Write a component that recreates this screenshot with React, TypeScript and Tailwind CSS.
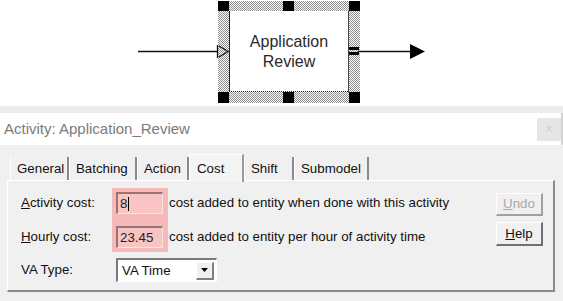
import React from "react";

const font = { fontFamily: '"Liberation Sans", Arial, sans-serif' } as React.CSSProperties;

function Diagram() {
  return (
    <div className="relative h-[106px] w-full bg-white">
      <svg className="absolute left-0 top-0" width="563" height="106" viewBox="0 0 563 106">
        <defs>
          <pattern id="dots" width="2" height="2" patternUnits="userSpaceOnUse">
            <rect width="2" height="2" fill="#ffffff" />
            <rect x="0" y="0" width="1" height="1" fill="#8c8c8c" />
            <rect x="1" y="1" width="1" height="1" fill="#8c8c8c" />
          </pattern>
        </defs>
        <line x1="138" y1="51.5" x2="218" y2="51.5" stroke="#111" strokeWidth="1.4" />
        <path d="M218 1 H360 V103 H218 Z M229 11 V92 H349 V11 Z" fill="url(#dots)" fillRule="evenodd" />
        <rect x="229" y="11" width="120" height="81" fill="#fff" />
        <line x1="229.5" y1="11" x2="229.5" y2="92" stroke="#222" strokeWidth="1" />
        <line x1="229" y1="91.5" x2="349" y2="91.5" stroke="#222" strokeWidth="1" strokeDasharray="1 1" />
        <line x1="348.5" y1="11" x2="348.5" y2="92" stroke="#444" strokeWidth="1" />
        {[218, 283, 349].map((x) => (
          <React.Fragment key={x}>
            <rect x={x} y="1" width="11" height="10" fill="#000" />
            <rect x={x} y="92" width="11" height="11" fill="#000" />
          </React.Fragment>
        ))}
        <line x1="217.5" y1="45" x2="217.5" y2="58" stroke="#111" strokeWidth="1.3" />
        <path d="M219 46 L228 51.5 L219 57" fill="none" stroke="#111" strokeWidth="1.2" />
        <rect x="349" y="47" width="10" height="3" fill="#000" />
        <rect x="349" y="52" width="10" height="3" fill="#000" />
        <line x1="358" y1="51.5" x2="411" y2="51.5" stroke="#111" strokeWidth="1.4" />
        <path d="M410 44 L425 51.5 L410 59 Z" fill="#000" />
      </svg>
      <div
        className="absolute left-[229px] top-[11px] flex h-[81px] w-[120px] flex-col items-center justify-center text-[16px] leading-[20px] text-[#2a2a2a]"
        style={font}
      >
        <span>Application</span>
        <span>Review</span>
      </div>
    </div>
  );
}

function Tab({ label, w, selected }: { label: string; w: number; selected?: boolean }) {
  if (selected) {
    return (
      <div
        className="relative z-10 mb-[-2px] flex h-[28px] items-start border-l border-t border-r-2 border-l-white border-t-white border-r-[#9a9a9a] bg-[#f4f4f4] pl-[7px] pt-[4px] text-[13.3px] text-[#111]"
        style={{ width: w }}
      >
        {label}
      </div>
    );
  }
  return (
    <div
      className="flex h-[23px] items-center border-l border-r-2 border-l-white border-r-[#8a8a8a] pl-[6px] text-[13.3px] text-[#111]"
      style={{ width: w }}
    >
      {label}
    </div>
  );
}

export default function App() {
  return (
    <div className="flex h-[301px] w-[563px] flex-col overflow-hidden bg-white" style={font}>
      <Diagram />
      <div className="h-[7px] bg-[#ececec]" />
      <div className="flex h-[32px] items-center justify-between border-r-2 border-r-[#d4d4d4] bg-white pl-[4px] pr-[0px]">
        <span className="text-[15px] text-[#7b7b7b]">Activity: Application_Review</span>
        <div className="flex h-[23px] w-[24px] items-center justify-center bg-[#e6e6e6] text-[12px] leading-none text-[#cfcfcf]">
          ×
        </div>
      </div>
      <div className="flex flex-1 flex-col bg-[#f0f0f0] pl-[7px] pr-[8px]">
        <div className="flex h-[35px] items-end pl-[3px]">
          <Tab label="General" w={59} />
          <Tab label="Batching" w={68} />
          <Tab label="Action" w={52} />
          <Tab label="Cost" w={55} selected />
          <Tab label="Shift" w={50} />
          <Tab label="Submodel" w={75} />
        </div>
        <div className="flex h-[112px] flex-col border-l border-t border-b-2 border-r-2 border-l-white border-t-white border-b-[#8a8a8a] border-r-[#8a8a8a] pl-[13px] pr-[10px] pt-[7px]">
          <div className="flex">
            <div className="flex w-[91px] flex-col gap-[12px] pt-[4px] text-[13.3px] text-[#111]">
              <div className="flex h-[22px] items-center">
                <span><span className="underline">A</span>ctivity cost:</span>
              </div>
              <div className="flex h-[22px] items-center">
                <span><span className="underline">H</span>ourly cost:</span>
              </div>
            </div>
            <div className="flex w-[56px] flex-col gap-[12px] bg-[#f6b9b9] p-[4px]">
              <div className="flex h-[22px] w-[47px] items-center border-l-2 border-t-2 border-b border-r border-l-[#9a7474] border-t-[#9a7474] border-b-[#fbe2e2] border-r-[#fbe2e2] bg-[#f8c4c4] pl-[2px] text-[13.3px] text-[#222]">
                8<span className="ml-[1px] inline-block h-[14px] w-[1px] bg-black" />
              </div>
              <div className="flex h-[22px] w-[47px] items-center border-l-2 border-t-2 border-b border-r border-l-[#9a7474] border-t-[#9a7474] border-b-[#fbe2e2] border-r-[#fbe2e2] bg-[#f8c4c4] pl-[2px] text-[13.3px] text-[#222]">
                23.45
              </div>
            </div>
            <div className="flex flex-col gap-[12px] pl-[1px] pt-[4px] text-[13.3px] text-[#111]">
              <div className="flex h-[22px] items-center">cost added to entity when done with this activity</div>
              <div className="flex h-[22px] items-center">cost added to entity per hour of activity time</div>
            </div>
            <div className="flex-1" />
            <div className="flex flex-col gap-[6px] pt-[5px]">
              <div className="flex h-[23px] w-[47px] items-center justify-center border-l border-t border-b-2 border-r-2 border-l-white border-t-white border-b-[#a0a0a0] border-r-[#a0a0a0] text-[13.3px] text-[#a8a8a8]">
                <span><span className="underline">U</span>ndo</span>
              </div>
              <div className="flex h-[24px] w-[47px] items-center justify-center border-l border-t border-b-2 border-r-2 border-l-white border-t-white border-b-[#707070] border-r-[#707070] text-[13.3px] text-[#111]">
                <span><span className="underline">H</span>elp</span>
              </div>
            </div>
          </div>
          <div className="mt-[6px] flex items-center">
            <div className="w-[95px] text-[13.3px] text-[#111]">VA Type:</div>
            <div className="flex h-[24px] w-[101px] items-center justify-between border-l-2 border-t-2 border-b border-r border-l-[#7a7a7a] border-t-[#7a7a7a] border-b-white border-r-white bg-white pl-[4px] pr-[2px] text-[13.3px] text-[#111]">
              <span>VA Time</span>
              <div className="flex h-[18px] w-[18px] items-center justify-center border-l border-t border-b-2 border-r-2 border-l-white border-t-white border-b-[#808080] border-r-[#808080] bg-[#f0f0f0]">
                <svg width="7" height="4" viewBox="0 0 7 4">
                  <path d="M0 0 H7 L3.5 4 Z" fill="#000" />
                </svg>
              </div>
            </div>
          </div>
        </div>
      </div>
    </div>
  );
}
